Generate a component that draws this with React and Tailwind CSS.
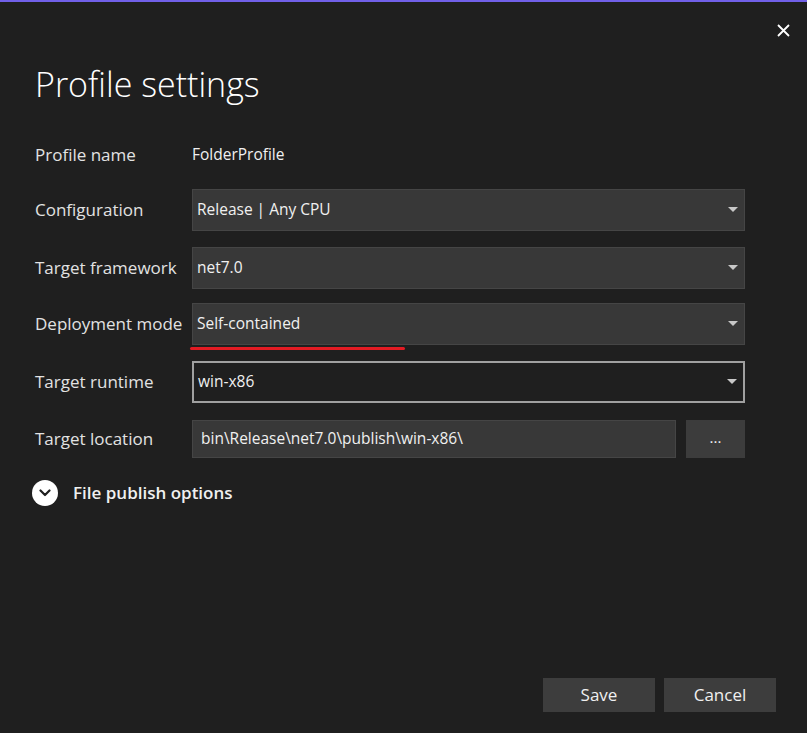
import React from "react";

const font = { fontFamily: '"Open Sans", "Noto Sans", sans-serif' };

const Caret = () => (
  <svg width="10" height="6" viewBox="0 0 10 6" className="shrink-0">
    <path d="M0 0 L10 0 L5 5 Z" fill="#c8c8c8" />
  </svg>
);

const Dropdown = ({ value, focused }) => (
  <div
    className={`flex h-[42px] w-[553px] items-center justify-between pl-[4px] pr-[6px] ${
      focused
        ? "border-2 border-[#a0a0a0] bg-[#1f1f1f]"
        : "border border-[#454545] bg-[#383838]"
    }`}
  >
    <span className="text-[15.5px] text-[#f0f0f0]">{value}</span>
    <Caret />
  </div>
);

const Row = ({ label, children, className = "" }) => (
  <div className={`flex items-center ${className}`}>
    <div className="w-[157px] shrink-0 text-[17px] text-[#e2e2e2]">{label}</div>
    {children}
  </div>
);

export default function App() {
  return (
    <div className="flex h-[733px] w-[807px] flex-col bg-[#1f1f1f]" style={font}>
      <div className="h-[2px] bg-[#7160e8]" />

      <div className="flex justify-end pr-[17px] pt-[22px]">
        <svg width="13" height="13" viewBox="0 0 13 13">
          <path d="M1 1 L12 12 M12 1 L1 12" stroke="#ffffff" strokeWidth="1.8" />
        </svg>
      </div>

      <div className="pl-[35px] pt-[30px] text-[34px] font-light leading-none text-white">
        Profile settings
      </div>

      <div className="flex flex-col pl-[35px] pt-[36px]">
        <Row label="Profile name" className="h-[36px]">
          <span className="text-[15.5px] text-[#f0f0f0]">FolderProfile</span>
        </Row>

        <Row label="Configuration" className="mt-[16px]">
          <Dropdown value="Release | Any CPU" />
        </Row>

        <Row label="Target framework" className="mt-[16px]">
          <Dropdown value="net7.0" />
        </Row>

        <Row label="Deployment mode" className="mt-[14px]">
          <div className="relative">
            <Dropdown value="Self-contained" />
            <div className="absolute left-[-2px] top-[44px] h-[3px] w-[215px] rounded-full bg-[#e31b23]" />
          </div>
        </Row>

        <Row label="Target runtime" className="mt-[16px]">
          <Dropdown value="win-x86" focused />
        </Row>

        <Row label="Target location" className="mt-[17px]">
          <div className="flex h-[38px] w-[484px] items-center border border-[#454545] bg-[#383838] pl-[8px]">
            <span className="text-[15.5px] text-[#f0f0f0]">bin\Release\net7.0\publish\win-x86\</span>
          </div>
          <div className="ml-[10px] flex h-[38px] w-[59px] items-center justify-center bg-[#3c3c3c] pb-[4px] text-[15px] text-[#f0f0f0]">
            ...
          </div>
        </Row>
      </div>

      <div className="flex items-center pl-[32px] pt-[22px]">
        <div className="flex h-[26px] w-[26px] items-center justify-center rounded-full bg-white">
          <svg width="12" height="8" viewBox="0 0 12 8">
            <path d="M1.5 1.5 L6 6 L10.5 1.5" fill="none" stroke="#1f1f1f" strokeWidth="2.2" strokeLinecap="round" strokeLinejoin="round" />
          </svg>
        </div>
        <span className="ml-[15px] text-[17px] font-semibold text-[#f0f0f0]">File publish options</span>
      </div>

      <div className="mt-auto flex justify-end gap-[9px] pb-[21px] pr-[31px]">
        <button className="h-[34px] w-[112px] bg-[#3d3d3d] text-[17px] text-[#f0f0f0]">Save</button>
        <button className="h-[34px] w-[112px] bg-[#3d3d3d] text-[17px] text-[#f0f0f0]">Cancel</button>
      </div>
    </div>
  );
}
